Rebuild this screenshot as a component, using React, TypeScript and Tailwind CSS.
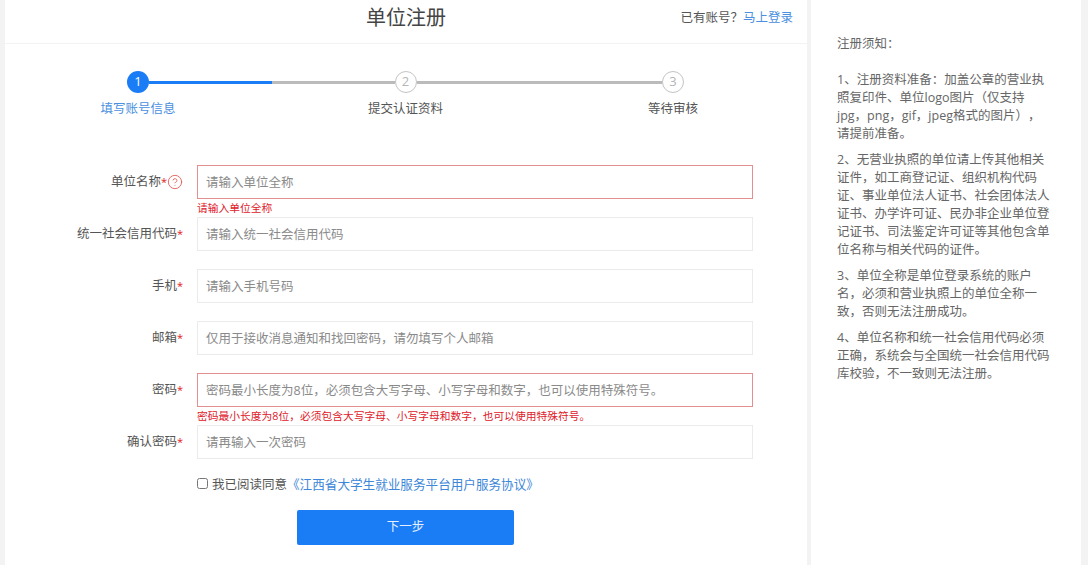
import { CircleHelp } from "lucide-react";

const FONT = "[font-family:'Open_Sans','Noto_Sans_CJK_SC',sans-serif] [text-spacing-trim:space-all]";

type Field = { label: string; placeholder: string; error?: string; help?: boolean };

const FIELDS: Field[] = [
  { label: "单位名称", placeholder: "请输入单位全称", error: "请输入单位全称", help: true },
  { label: "统一社会信用代码", placeholder: "请输入统一社会信用代码" },
  { label: "手机", placeholder: "请输入手机号码" },
  { label: "邮箱", placeholder: "仅用于接收消息通知和找回密码，请勿填写个人邮箱" },
  {
    label: "密码",
    placeholder: "密码最小长度为8位，必须包含大写字母、小写字母和数字，也可以使用特殊符号。",
    error: "密码最小长度为8位，必须包含大写字母、小写字母和数字，也可以使用特殊符号。",
  },
  { label: "确认密码", placeholder: "请再输入一次密码" },
];

const STEPS = ["填写账号信息", "提交认证资料", "等待审核"];

function Step({ n, label, active }: { n: number; label: string; active?: boolean }) {
  return (
    <div className="flex w-[22px] shrink-0 flex-col items-center">
      <div
        className={
          active
            ? "flex h-[22px] w-[22px] items-center justify-center rounded-full bg-[#1a7df5] text-[13px] text-white"
            : "flex h-[22px] w-[22px] items-center justify-center rounded-full border border-[#c4c4c4] bg-white text-[13px] text-[#b5b5b5]"
        }
      >
        {n}
      </div>
      <div
        className={
          active
            ? "mt-[7px] whitespace-nowrap text-[12.5px] leading-[18px] text-[#4a8fe0]"
            : "mt-[7px] whitespace-nowrap text-[12.5px] leading-[18px] text-[#555]"
        }
      >
        {label}
      </div>
    </div>
  );
}

function Stepper() {
  return (
    <div className="ml-[122px] mt-[27px] flex w-[557px] items-start">
      <Step n={1} label={STEPS[0]} active />
      <div className="mt-[10px] flex h-[3px] flex-1">
        <div className="h-full w-1/2 bg-[#1a7df5]" />
        <div className="h-full w-1/2 bg-[#bbbbbb]" />
      </div>
      <Step n={2} label={STEPS[1]} />
      <div className="mt-[10px] h-[3px] flex-1 bg-[#bbbbbb]" />
      <Step n={3} label={STEPS[2]} />
    </div>
  );
}

function FormRow({ field }: { field: Field }) {
  return (
    <div className="flex h-[52px] items-start">
      <div className="flex h-[34px] w-[178px] shrink-0 items-center justify-end text-[12.5px] text-[#555]">
        {field.label}
        <span className="text-[11px] text-[#e02020]">*</span>
        {field.help && <CircleHelp size={16} strokeWidth={1.3} className="text-[#e0584f]" />}
      </div>
      <div className="ml-[14px] w-[556px]">
        <input
          readOnly
          placeholder={field.placeholder}
          className={
            field.error
              ? "block h-[34px] w-full border border-[#e38f8f] bg-white px-[8px] text-[12.5px] outline-none placeholder:text-[#8a8a8a]"
              : "block h-[34px] w-full border border-[#ebebeb] bg-white px-[8px] text-[12.5px] outline-none placeholder:text-[#8a8a8a]"
          }
        />
        {field.error && (
          <div className="whitespace-nowrap text-[10.75px] leading-[18px] text-[#e0202a]">{field.error}</div>
        )}
      </div>
    </div>
  );
}

export default function App() {
  return (
    <div className={`${FONT} flex h-[565px] w-[1088px] overflow-hidden bg-[#f3f3f3] pl-[5px]`}>
      <main className="h-full w-[802px] shrink-0 bg-white">
        <header className="relative flex h-[44px] items-center justify-center border-b border-[#f3f3f3]">
          <h1 className="pb-[7px] text-[20px] font-normal text-[#444]">单位注册</h1>
          <div className="absolute right-[14px] top-[9px] text-[12.5px] leading-[18px] text-[#555]">
            已有账号？<a className="text-[#4a8fe0]">马上登录</a>
          </div>
        </header>

        <Stepper />

        <form className="mt-[47px]">
          {FIELDS.map((f) => (
            <FormRow key={f.label} field={f} />
          ))}

          <label className="-mt-[1px] ml-[192px] flex h-[18px] items-center text-[12.5px] text-[#555]">
            <input type="checkbox" className="m-0 h-[11px] w-[11px] shrink-0 -translate-y-[2px]" />
            <span className="ml-[4px]">我已阅读同意</span>
            <a className="text-[12.6px] text-[#3d86d8]">《江西省大学生就业服务平台用户服务协议》</a>
          </label>

          <button
            type="button"
            className="ml-[292px] mt-[16px] block h-[35px] w-[217px] rounded-[2px] bg-[#1a7df5] text-[12.5px] text-[#e6f0ff]"
          >
            下一步
          </button>
        </form>
      </main>

      <aside className="ml-[4px] h-full w-[270px] shrink-0 bg-white pl-[26px] pr-[30px] pt-[35px] text-[12.5px] leading-[18px] text-[#666]">
        <p>注册须知：</p>
        <p className="mt-[18px]">1、注册资料准备：加盖公章的营业执照复印件、单位logo图片（仅支持jpg，png，gif，jpeg格式的图片），请提前准备。</p>
        <p className="mt-[8px]">2、无营业执照的单位请上传其他相关证件，如工商登记证、组织机构代码证、事业单位法人证书、社会团体法人证书、办学许可证、民办非企业单位登记证书、司法鉴定许可证等其他包含单位名称与相关代码的证件。</p>
        <p className="mt-[8px]">3、单位全称是单位登录系统的账户名，必须和营业执照上的单位全称一致，否则无法注册成功。</p>
        <p className="mt-[8px]">4、单位名称和统一社会信用代码必须正确，系统会与全国统一社会信用代码库校验，不一致则无法注册。</p>
      </aside>
    </div>
  );
}
